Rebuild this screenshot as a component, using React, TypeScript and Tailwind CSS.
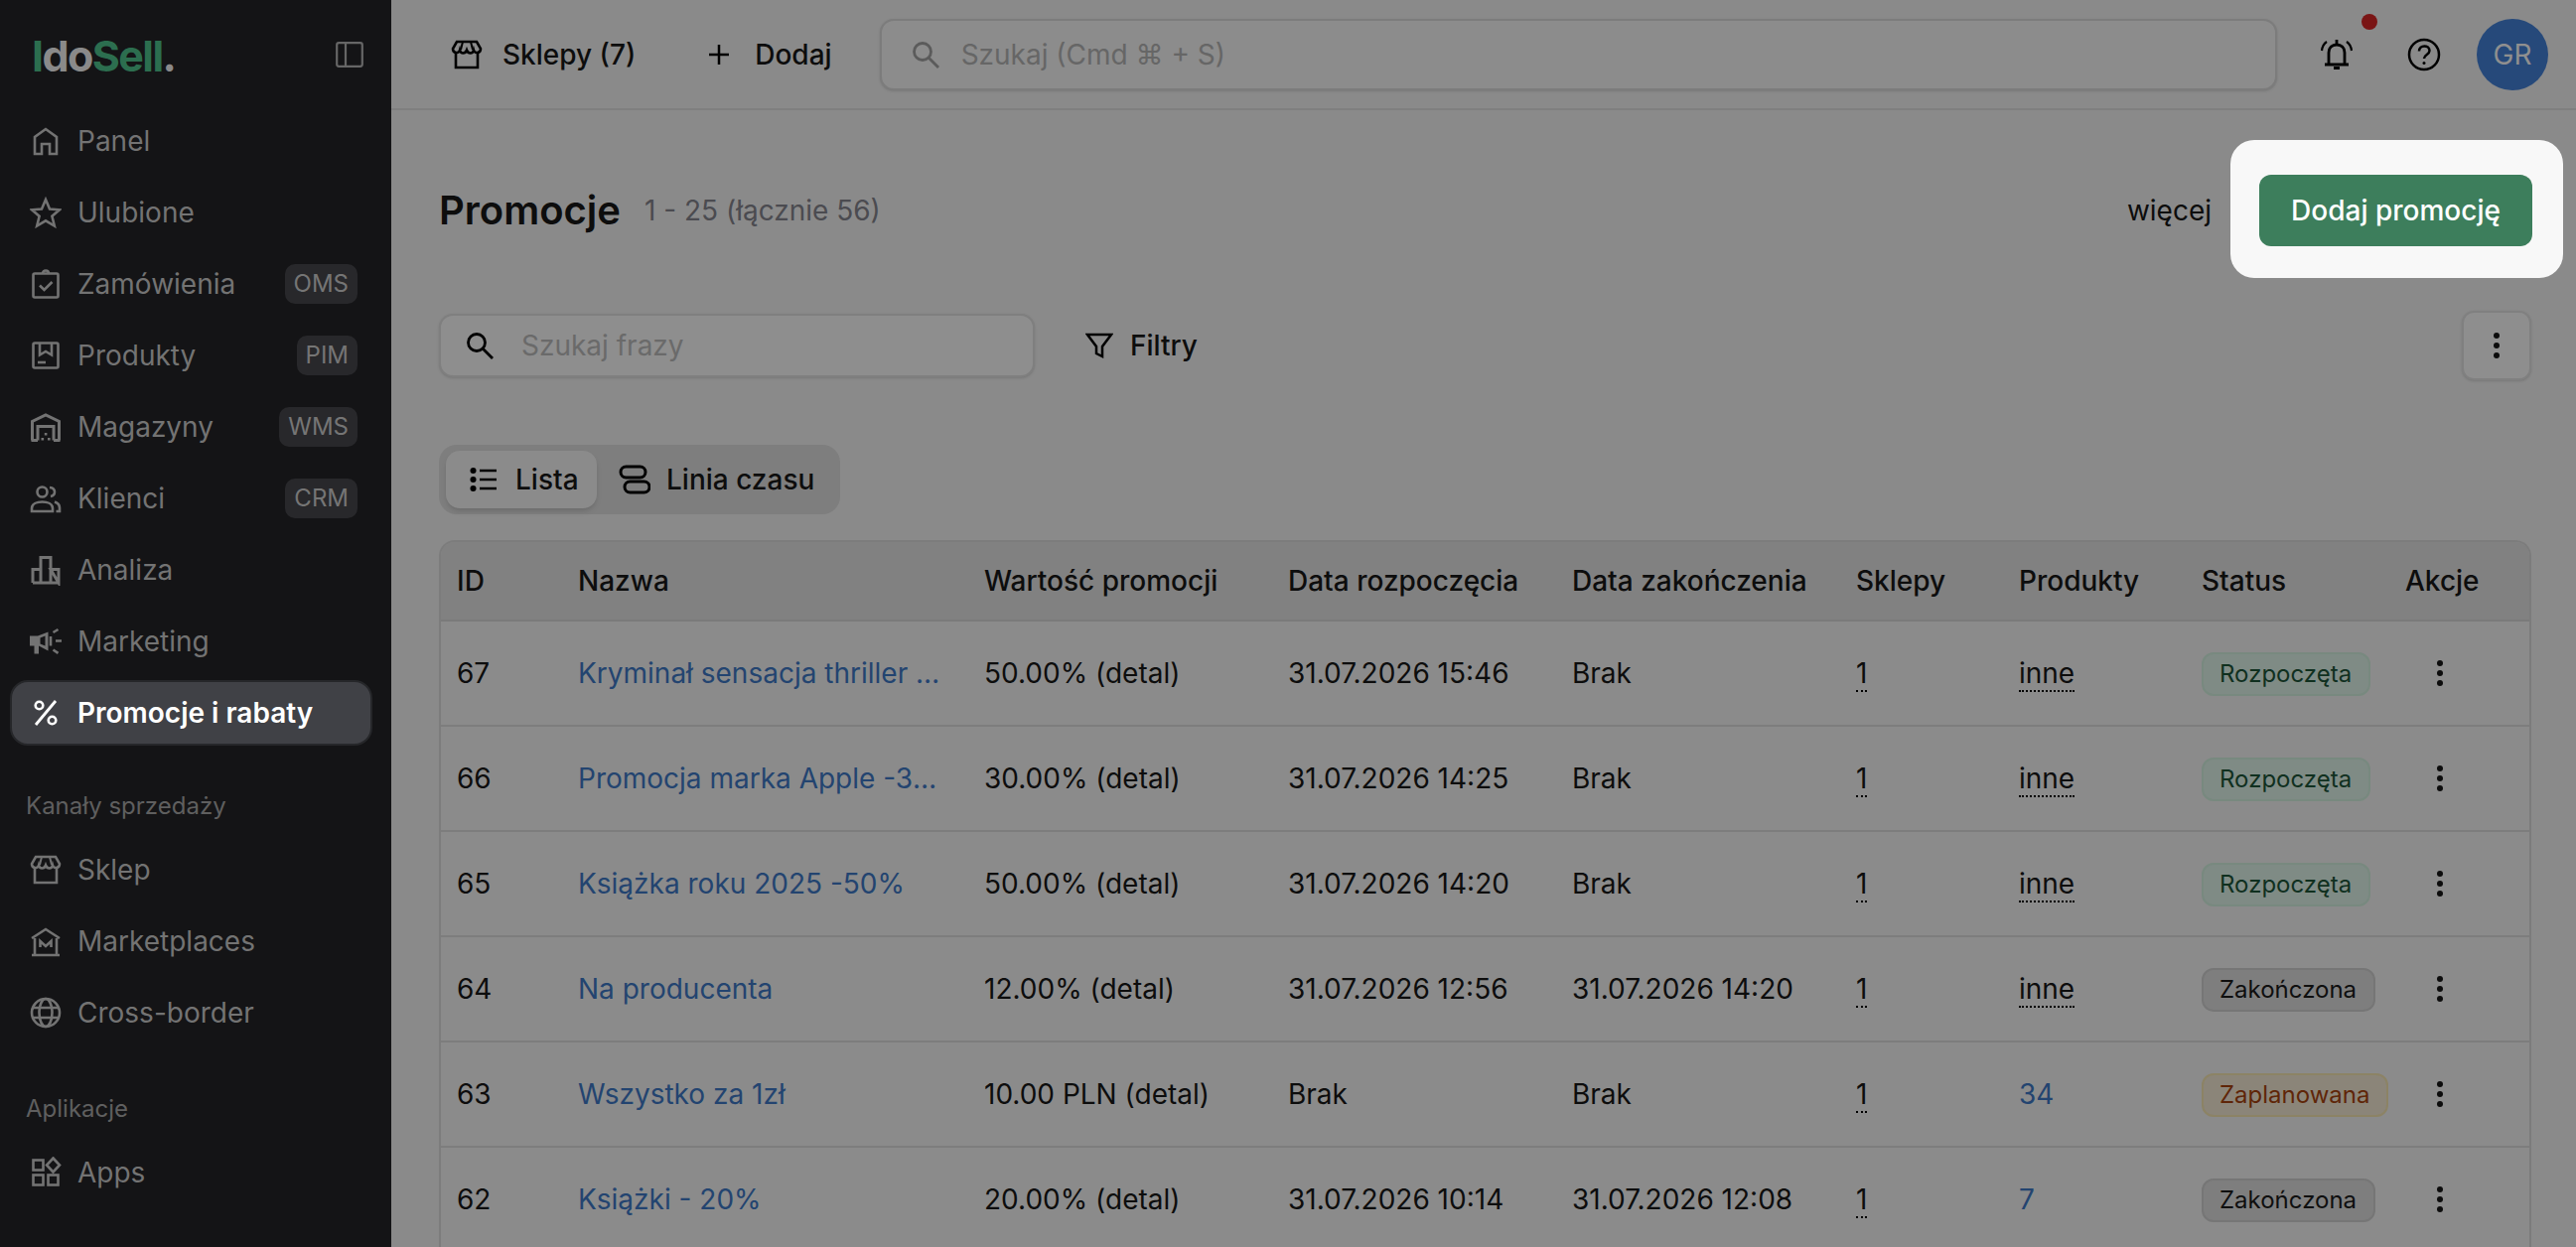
import type { ReactNode } from 'react';

function Icon({ children, className = '' }: { children: ReactNode; className?: string }) {
    return (
        <svg viewBox="0 0 32 32" fill="none" stroke="currentColor" strokeWidth="2.600" className={`w-8 h-8 shrink-0 ${className}`}>
            {children}
        </svg>
    );
}

const icons: Record<string, ReactNode> = {
    home: <path d="M5 29V12L16 4l11 8v17h-7V19h-8v10z" />,
    star: <path d="M16 3l4 9.500 10 .8-7.600 6.500 2.400 9.700-8.800-5.200-8.800 5.200 2.400-9.700L2 13.300l10-.8z" />,
    clipboard: (
        <>
            <rect x="3.500" y="5.500" width="25" height="24" rx="1.500" />
            <path d="M13 5.500c0-4 6-4 6 0" />
            <path d="M10 17.500l4.500 4.500 8-8" />
        </>
    ),
    box: (
        <>
            <rect x="3.500" y="3.500" width="25" height="25" rx="1.500" />
            <path d="M10 4v11.500l6-3.500 6 3.500V4" />
            <path d="M8 23h8" />
        </>
    ),
    warehouse: (
        <>
            <path d="M2.500 29.500V10.500L16 4l13.500 6.500v19M8 29.500V15.500h16v14M1.500 29.500H8M24 29.500h6.500" strokeWidth="3" />
            <path fill="currentColor" stroke="none" d="M14.800 22h2.600v2.600h-2.600zM11.500 27h2.600v2.600h-2.600zM18 27h2.600v2.600H18z" />
        </>
    ),
    users: (
        <>
            <circle cx="12.500" cy="9.500" r="5" />
            <path d="M2 29v-3c0-4.500 5-6.500 10.500-6.500S23 21.500 23 26v3z" />
            <path d="M20 5c3.500.3 5 2.400 5 4.500 0 2.100-1.500 4-4 4.500M25 19.500c3 1 5 3 5 6V29h-3.500" />
        </>
    ),
    chart: <path d="M3 29V15.500h8M11 29V3.500h10V29M21 15.500h8V29zM3 29h26" strokeWidth="3" />,
    megaphone: (
        <>
            <path fill="currentColor" stroke="none" d="M0 10.500h8L18.500 6.500v19L9 20.500v8H4.500v-8H0z" />
            <path d="M21 11v9.500M26 15.500h6M23.500 7l5-3M23.500 24.500l5 3.300" />
            <path fill="#141416" stroke="none" d="M10.500 12.500l5-2v10l-5-2z" />
        </>
    ),
    percent: (
        <>
            <circle cx="9.500" cy="8.500" r="3.800" />
            <circle cx="22.500" cy="23.500" r="3.800" />
            <path d="M26 4L6 28" strokeWidth="2.800" />
        </>
    ),
    store: (
        <>
            <path d="M5 14v15h22V14" />
            <path d="M6 3h20l4 7c0 5-6 5-7 1.500C22 15.500 17.500 15.500 16 11.500c-1.500 4-6 4-7 0C8 15 2 15 2 10z" />
            <path d="M12 3l-2 8M20 3l2 8" strokeWidth="2" />
        </>
    ),
    market: (
        <>
            <path d="M2 30h28M5 30V13M27 30V13M2 13L16 4l14 9" />
            <path d="M10.500 22v-6l5.500 5 5.500-5v6" />
        </>
    ),
    globe: (
        <>
            <circle cx="16" cy="16" r="14" />
            <ellipse cx="16" cy="16" rx="6.500" ry="14" />
            <path d="M3 11h26M3 21h26" />
        </>
    ),
    apps: (
        <>
            <rect x="3.500" y="3.500" width="10" height="10" />
            <rect x="3.500" y="18.500" width="10" height="10" />
            <rect x="18.500" y="18.500" width="10" height="10" />
            <path d="M23.500 1.500l6.500 7-6.500 7-6.500-7z" />
        </>
    ),
};

function NavItem({ icon, label, badge, active }: { icon: string; label: string; badge?: string; active?: boolean }) {
    return (
        <div className={`h-[72px] pl-[10px] flex items-center ${active ? 'pr-[19px]' : 'pr-[20px]'}`}>
            <div
                className={`w-full flex items-center pl-[20px] pr-[14px] ${
                    active ? 'h-[66px] rounded-[18px] bg-[#404146] border-2 border-[#26272a] text-white font-semibold' : 'text-[#737373]'
                }`}
            >
                <Icon className={active ? '-ml-[2px]' : ''}>{icons[icon]}</Icon>
                <span className="ml-[16px] text-[28px]">{label}</span>
                {badge && (
                    <span className="ml-auto h-[40px] px-[9px] flex items-center rounded-[10px] bg-[#28282b] text-[24px] text-[#757575]">{badge}</span>
                )}
            </div>
        </div>
    );
}

function Kebab() {
    return (
        <svg viewBox="0 0 8 28" className="w-2 h-7 fill-current">
            <circle cx="4" cy="4" r="3" />
            <circle cx="4" cy="14" r="3" />
            <circle cx="4" cy="24" r="3" />
        </svg>
    );
}

function SearchGlyph({ className = '' }: { className?: string }) {
    return (
        <svg viewBox="0 0 30 30" fill="none" stroke="currentColor" strokeWidth="2.800" className={`w-[30px] h-[30px] shrink-0 ${className}`}>
            <circle cx="12" cy="12" r="8.500" />
            <path d="M18 18l10 10" />
        </svg>
    );
}

type Row = {
    id: number;
    name: string;
    value: string;
    start: string;
    end: string;
    products: string;
    status: 'Rozpoczęta' | 'Zakończona' | 'Zaplanowana';
};

const rows: Row[] = [
    { id: 67, name: 'Kryminał sensacja thriller -20%', value: '50.00% (detal)', start: '31.07.2026 15:46', end: 'Brak', products: 'inne', status: 'Rozpoczęta' },
    { id: 66, name: 'Promocja marka Apple -30%', value: '30.00% (detal)', start: '31.07.2026 14:25', end: 'Brak', products: 'inne', status: 'Rozpoczęta' },
    { id: 65, name: 'Książka roku 2025 -50%', value: '50.00% (detal)', start: '31.07.2026 14:20', end: 'Brak', products: 'inne', status: 'Rozpoczęta' },
    { id: 64, name: 'Na producenta', value: '12.00% (detal)', start: '31.07.2026 12:56', end: '31.07.2026 14:20', products: 'inne', status: 'Zakończona' },
    { id: 63, name: 'Wszystko za 1zł', value: '10.00 PLN (detal)', start: 'Brak', end: 'Brak', products: '34', status: 'Zaplanowana' },
    { id: 62, name: 'Książki - 20%', value: '20.00% (detal)', start: '31.07.2026 10:14', end: '31.07.2026 12:08', products: '7', status: 'Zakończona' },
];

const statusStyles = {
    'Rozpoczęta': 'bg-[#7f8b85] border-[#78897f] text-[#10301f]',
    'Zakończona': 'bg-[#7e7e7e] border-[#767676] text-[#0f0f0f]',
    'Zaplanowana': 'bg-[#8b8579] border-[#8c8365] text-[#5f2508]',
};

const headers = ['ID', 'Nazwa', 'Wartość promocji', 'Data rozpoczęcia', 'Data zakończenia', 'Sklepy', 'Produkty', 'Status', 'Akcje'];

export default function App() {
    return (
        <div className="flex h-[1256px] overflow-hidden font-['Inter',sans-serif] text-[28px] text-[#0d0d0d]">
            <aside className="w-[394px] shrink-0 bg-[#141416]">
                <div className="h-[106px] flex items-center justify-between pl-[32px] pr-[28px]">
                    <div className="mt-[6px] text-[43px] leading-none font-bold tracking-[-1.600px] text-[#8a8a8a]">
                        <span className="text-[#2c6e4f]">I</span>do<span className="text-[#2c6e4f]">Sell</span>.
                    </div>
                    <svg viewBox="0 0 28 26" fill="none" stroke="#666" strokeWidth="2.200" className="w-[28px] h-[26px] mt-[4px]">
                        <rect x="1.200" y="1.200" width="25.600" height="23.600" rx="2" />
                        <path d="M10 1v24" />
                    </svg>
                </div>
                <NavItem icon="home" label="Panel" />
                <NavItem icon="star" label="Ulubione" />
                <NavItem icon="clipboard" label="Zamówienia" badge="OMS" />
                <NavItem icon="box" label="Produkty" badge="PIM" />
                <NavItem icon="warehouse" label="Magazyny" badge="WMS" />
                <NavItem icon="users" label="Klienci" badge="CRM" />
                <NavItem icon="chart" label="Analiza" />
                <NavItem icon="megaphone" label="Marketing" />
                <NavItem icon="percent" label="Promocje i rabaty" active />
                <div className="mt-[42px] mb-[12px] pl-[26px] h-[32px] leading-[32px] text-[24px] text-[#5f5f5f]">Kanały sprzedaży</div>
                <NavItem icon="store" label="Sklep" />
                <NavItem icon="market" label="Marketplaces" />
                <NavItem icon="globe" label="Cross-border" />
                <div className="mt-[45px] mb-[12px] pl-[26px] h-[32px] leading-[32px] text-[24px] text-[#5f5f5f]">Aplikacje</div>
                <NavItem icon="apps" label="Apps" />
            </aside>

            <main className="flex-1 min-w-0 bg-[#8a8a8a] flex flex-col">
                <header className="h-[111px] shrink-0 border-b-2 border-[#7f7f7f] flex items-center pl-[60px] pr-[28px]">
                    <Icon className="text-black">{icons.store}</Icon>
                    <span className="ml-[20px] font-medium">Sklepy (7)</span>
                    <svg viewBox="0 0 32 32" fill="none" stroke="#000" strokeWidth="2.500" className="w-8 h-8 ml-[68px]">
                        <path d="M16 6v20M6 16h20" />
                    </svg>
                    <span className="ml-[20px] font-medium">Dodaj</span>
                    <div className="ml-[48px] flex-1 h-[72px] flex items-center rounded-[14px] border-2 border-[#7c7c7c] bg-[#8c8c8c] pl-[29px] shadow-sm text-[#5b5b5b]">
                        <SearchGlyph />
                        <span className="ml-[21px] text-[#666]">Szukaj (Cmd ⌘ + S)</span>
                    </div>
                    <div className="relative ml-[43px]">
                        <svg viewBox="0 0 34 34" fill="none" stroke="#000" strokeWidth="2.800" className="w-[34px] h-[34px]">
                            <path d="M9 27V15c0-5 3.500-8 8-8s8 3 8 8v12M5 27h24" />
                            <path d="M17 2v4M14 30.500h6" />
                            <path d="M7 4c-3 2-4.500 5-5 9M27 4c3 2 4.500 5 5 9" strokeWidth="2.200" />
                        </svg>
                        <span className="absolute left-[42px] -top-[24px] w-4 h-4 rounded-full bg-[#7a1515]" />
                    </div>
                    <svg viewBox="0 0 34 34" fill="none" stroke="#000" strokeWidth="2.500" className="w-[34px] h-[34px] ml-[54px]">
                        <circle cx="17" cy="17" r="15" />
                        <path d="M12 13.500c0-7 10.500-6.500 10.500-.5 0 4-5.500 4-5.500 8" />
                        <circle cx="17" cy="25.500" r="1.500" fill="#000" stroke="none" />
                    </svg>
                    <div className="ml-[36px] w-[72px] h-[72px] rounded-full bg-[#26497a] flex items-center justify-center text-[#8f8f8f]">GR</div>
                </header>

                <div className="pl-[48px] pr-[45px] pt-[30px]">
                    <div className="flex items-center">
                        <h1 className="text-[40px] font-semibold mt-[3px]">Promocje</h1>
                        <span className="ml-[24px] mt-[3px] text-[#4b4b50]">1 - 25 (łącznie 56)</span>
                        <span className="ml-auto mr-[19px] mt-[3px]">więcej</span>
                        <div className="-mr-[32px] pl-[29px] pr-[31px] pt-[35px] pb-[32px] rounded-[24px] bg-[#f8f8f8]">
                            <button className="w-[275px] h-[72px] rounded-[12px] bg-[#3d7e5c] text-white font-medium">Dodaj promocję</button>
                        </div>
                    </div>

                    <div className="mt-[33px] h-[70px] flex items-center">
                        <div className="w-[600px] h-[64px] flex items-center rounded-[14px] border-2 border-[#7f7f7f] bg-[#8e8e8e] pl-[24px] shadow-sm">
                            <SearchGlyph className="text-black" />
                            <span className="ml-[27px] text-[#6a6a6a]">Szukaj frazy</span>
                        </div>
                        <svg viewBox="0 0 28 28" fill="none" stroke="#000" strokeWidth="2.500" className="w-7 h-7 ml-[51px]">
                            <path d="M2 3h24L17 15v10l-6-3v-7z" />
                        </svg>
                        <span className="ml-[17px] font-medium">Filtry</span>
                        <button className="ml-auto w-[70px] h-[70px] rounded-[12px] border-2 border-[#808080] bg-[#8e8e8e] flex items-center justify-center shadow-sm">
                            <Kebab />
                        </button>
                    </div>

                    <div className="mt-[65px] w-[404px] h-[70px] rounded-[18px] bg-[#7e7e7e] flex items-center pl-[7px]">
                        <div className="w-[152px] h-[58px] rounded-[14px] bg-[#8b8b8b] shadow-md flex items-center pl-[24px] font-medium">
                            <svg viewBox="0 0 28 28" className="w-7 h-7 fill-black" stroke="#000" strokeWidth="2.500">
                                <circle cx="3.500" cy="5" r="1.800" />
                                <circle cx="3.500" cy="14" r="1.800" />
                                <circle cx="3.500" cy="23" r="1.800" />
                                <path d="M10 5h17M10 14h17M10 23h17" />
                            </svg>
                            <span className="ml-[18px]">Lista</span>
                        </div>
                        <svg viewBox="0 0 32 32" fill="none" stroke="#000" strokeWidth="3" className="w-8 h-8 ml-[22px]">
                            <rect x="2" y="3" width="25" height="11" rx="5.500" />
                            <rect x="6" y="18" width="25" height="11" rx="5.500" />
                        </svg>
                        <span className="ml-[16px] font-medium">Linia czasu</span>
                    </div>

                    <div className="mt-[26px] rounded-t-[16px] border-x-2 border-t-2 border-[#7c7c7c] overflow-hidden">
                        <table className="w-full table-fixed border-collapse">
                            <colgroup>
                                <col className="w-[122px]" />
                                <col className="w-[409px]" />
                                <col className="w-[306px]" />
                                <col className="w-[286px]" />
                                <col className="w-[286px]" />
                                <col className="w-[164px]" />
                                <col className="w-[184px]" />
                                <col className="w-[205px]" />
                                <col />
                            </colgroup>
                            <thead>
                                <tr className="h-[79px] bg-[#818181] border-b-2 border-[#7a7a7a]">
                                    {headers.map((h) => (
                                        <th key={h} className="pl-[16px] text-left font-medium whitespace-nowrap">
                                            {h}
                                        </th>
                                    ))}
                                </tr>
                            </thead>
                            <tbody>
                                {rows.map((r) => (
                                    <tr key={r.id} className="h-[106px] bg-[#8b8b8b] border-b-2 border-[#7d7d7d]">
                                        <td className="pl-[16px]">{r.id}</td>
                                        <td className="pl-[16px] pr-[28px] truncate text-[#234470]">{r.name}</td>
                                        <td className="pl-[16px] whitespace-nowrap">{r.value}</td>
                                        <td className="pl-[16px] whitespace-nowrap">{r.start}</td>
                                        <td className="pl-[16px] whitespace-nowrap">{r.end}</td>
                                        <td className="pl-[16px]">
                                            <span className="inline-block leading-[34px] border-b-2 border-dotted border-black">1</span>
                                        </td>
                                        <td className="pl-[16px]">
                                            {r.products === 'inne' ? (
                                                <span className="inline-block leading-[34px] border-b-2 border-dotted border-black">inne</span>
                                            ) : (
                                                <span className="text-[#234470]">{r.products}</span>
                                            )}
                                        </td>
                                        <td className="pl-[16px]">
                                            <span className={`inline-flex items-center h-[44px] pl-[16px] pr-[17px] rounded-[12px] border-2 text-[24px] whitespace-nowrap ${statusStyles[r.status]}`}>
                                                {r.status}
                                            </span>
                                        </td>
                                        <td className="pl-[47px]">
                                            <span className="flex">
                                                <Kebab />
                                            </span>
                                        </td>
                                    </tr>
                                ))}
                            </tbody>
                        </table>
                    </div>
                </div>
            </main>
        </div>
    );
}
